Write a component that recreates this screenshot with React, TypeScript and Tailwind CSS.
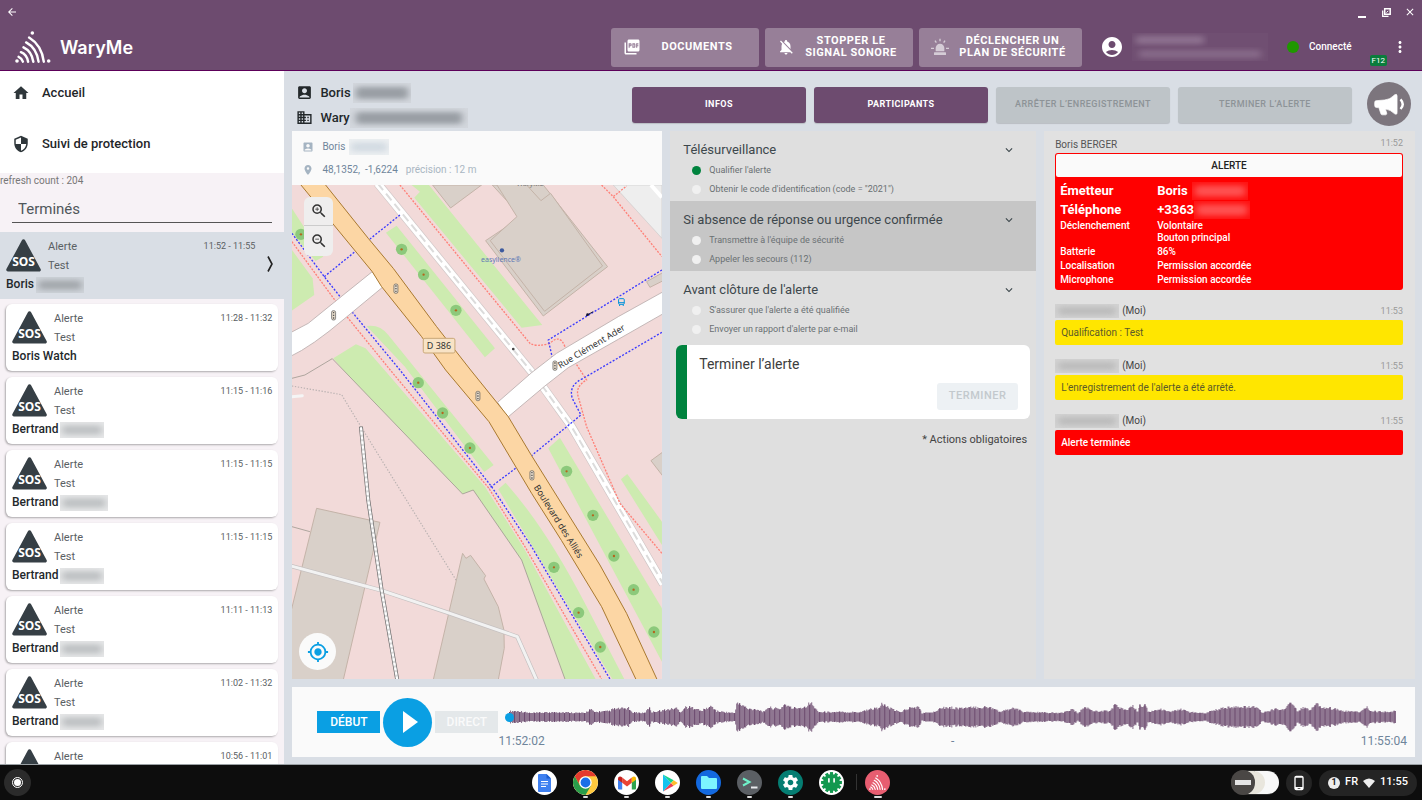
import React from "react";
import {
  MdAccountBox,
  MdAccountCircle,
  MdArrowBack,
  MdBusiness,
  MdClose,
  MdExpandMore,
  MdHome,
  MdLocationOn,
  MdMoreVert,
  MdMyLocation,
  MdNotificationsOff,
  MdOutlinePhoneAndroid,
  MdPictureAsPdf,
  MdSecurity,
  MdSettings,
  MdZoomIn,
  MdZoomOut,
} from "react-icons/md";

function Masked({ className, bar }: { className: string; bar: string }) {
  return (
    <span aria-hidden="true" className={`block overflow-hidden ${className}`}>
      <span className={`block h-full w-full scale-x-90 scale-y-60 rounded-sm blur-[4px] ${bar}`} />
    </span>
  );
}

function WaryLogo({ className }: { className: string }) {
  return (
    <svg viewBox="0 0 110 98" className={className} aria-hidden="true">
      <g fill="none" stroke="currentColor" strokeWidth="7.5" strokeLinecap="round">
        <path d="M43 20Q82 44 88 94" />
        <path d="M34 35Q66 52 72 94" />
        <path d="M26 50Q51 62 56 94" />
        <path d="M18 65Q36 72 40 94" />
        <path d="M11 79Q20 83 24 94" />
      </g>
      <g fill="currentColor">
        <circle cx="53" cy="6" r="5.5" />
        <circle cx="6" cy="92" r="5.5" />
        <circle cx="103" cy="92" r="5.5" />
      </g>
    </svg>
  );
}

function SosIcon() {
  return (
    <svg viewBox="0 0 35 33" className="h-[33px] w-[35px] shrink-0" aria-label="SOS" role="img">
      <path d="M17.5 2.2L33 30.8H2Z" fill="#363f45" stroke="#363f45" strokeWidth="3.6" strokeLinejoin="round" />
      <text x="17.5" y="26.5" textAnchor="middle" fontSize="12" fontWeight="700" fill="#fff" fontFamily="Noto Sans, sans-serif">
        SOS
      </text>
    </svg>
  );
}

function Siren() {
  return (
    <svg viewBox="0 0 54 54" className="h-[18px] w-[18px] shrink-0" fill="#d5ccd6" stroke="#d5ccd6" aria-hidden="true">
      <path d="M14 40V30a13 13 0 0 1 26 0v10z" stroke="none" />
      <rect x="9" y="43" width="36" height="8" rx="1" stroke="none" />
      <path d="M27 2v8M12 8l4 6M42 8l-4 6M0 31h9M45 31h9" strokeWidth="4" />
    </svg>
  );
}

function Header() {
  const btn =
    "flex h-[39px] items-center rounded-[3px] bg-[#977f98] pr-1.5 pl-3 text-[11px] leading-3 font-bold tracking-wider text-white";
  return (
    <header className="shrink-0 border-b border-[#5c0059] bg-[#6d4b6f] text-white">
      <div className="flex h-6 items-center px-1.5">
        <button aria-label="Retour">
          <MdArrowBack className="h-3 w-3" />
        </button>
        <div className="ml-auto flex items-center gap-3">
          <button aria-label="Réduire" className="flex h-3 w-3 items-end justify-center">
            <span className="h-[2px] w-2 bg-white" />
          </button>
          <button aria-label="Restaurer" className="flex h-3 w-3 items-center justify-center">
            <svg viewBox="0 0 9 9" className="h-[9px] w-[9px]" fill="none" stroke="#fff" aria-hidden="true">
              <path d="M2.7.8h5.5v5.5H2.7z" strokeWidth="1.5" />
              <path d="M.7 2.5v5.8h5.8" strokeWidth="1.3" />
              <path d="M4.5 4.6L6.3 2.8" />
            </svg>
          </button>
          <button aria-label="Fermer">
            <MdClose className="h-3 w-3" />
          </button>
        </div>
      </div>
      <div className="flex h-[46px] items-center pr-[13px] pl-[15px]">
        <WaryLogo className="h-8 w-9" />
        <span className="ml-[9px] pt-0.5 font-['Inter',sans-serif] text-[18px] leading-6 font-semibold">WaryMe</span>
        <div className="ml-auto flex gap-1.5">
          <button className={`${btn} w-[148px]`}>
            <MdPictureAsPdf className="h-[18px] w-[18px] shrink-0" />
            <span className="flex-1 text-center">DOCUMENTS</span>
          </button>
          <button className={`${btn} w-[148px]`}>
            <MdNotificationsOff className="h-[18px] w-[18px] shrink-0" />
            <span className="flex-1 text-center">
              STOPPER LE
              <br />
              SIGNAL SONORE
            </span>
          </button>
          <button className={`${btn} w-[163px]`}>
            <Siren />
            <span className="flex-1 text-center">
              DÉCLENCHER UN
              <br />
              PLAN DE SÉCURITÉ
            </span>
          </button>
        </div>
        <MdAccountCircle className="ml-[18px] h-6 w-6" />
        <div className="ml-2 flex w-[136px] flex-col bg-[#704f72]">
          <Masked className="h-3.5 w-[76px]" bar="bg-[#8d718f]" />
          <Masked className="h-3.5 w-[136px]" bar="bg-[#866988]" />
        </div>
        <span className="ml-[19px] h-3 w-3 rounded-full bg-[#1f9700]" />
        <span className="ml-2.5 text-[10px] leading-4 font-medium">Connecté</span>
        <span className="mt-[26px] ml-[18px] rounded-[2px] bg-[#0a7d3c] px-[2px] text-[8px] leading-[11px]">F12</span>
        <button aria-label="Plus d’options" className="ml-1">
          <MdMoreVert className="h-[18px] w-[18px]" />
        </button>
      </div>
    </header>
  );
}

type Item = { time: string; name: string; mask?: string };
const items: Item[] = [
  { time: "11:28 - 11:32", name: "Boris Watch" },
  { time: "11:15 - 11:16", name: "Bertrand", mask: "w-11" },
  { time: "11:15 - 11:15", name: "Bertrand", mask: "w-12" },
  { time: "11:15 - 11:15", name: "Bertrand", mask: "w-11" },
  { time: "11:11 - 11:13", name: "Bertrand", mask: "w-11" },
  { time: "11:02 - 11:32", name: "Bertrand", mask: "w-11" },
  { time: "10:56 - 11:01", name: "Bertrand", mask: "w-11" },
];

function AlertRow({ time, name, mask, selected }: Item & { selected?: boolean }) {
  return (
    <button
      className={`block h-[67px] w-full shrink-0 px-1.5 py-[5px] text-left ${
        selected ? "bg-[#d9dee5]" : "rounded-md bg-white shadow-[-1px_1px_2px_rgba(0,0,0,0.3)]"
      }`}
    >
      <span className="flex">
        <span className="pt-[2px]">
          <SosIcon />
        </span>
        <span className="ml-[7px] flex-1 text-[11px] leading-[19px] text-[#5a6063]">
          <span className="block">Alerte</span>
          <span className="block">Test</span>
        </span>
        <span className={`text-[9px] leading-[19px] text-[#5a6063] ${selected ? "mr-[11px]" : ""}`}>{time}</span>
        {selected && (
          <svg viewBox="0 0 8 18" className="mt-[18px] mr-1 h-[18px] w-2" fill="none" stroke="#222" strokeWidth="1.6" aria-hidden="true">
            <path d="M2 1.5L6 9L2 16.5" />
          </svg>
        )}
      </span>
      <span className="flex items-center text-[12px] leading-[19px] font-medium text-[#23282b]">
        {name}
        {mask && (
          <Masked
            className={`ml-0.5 h-4 ${selected ? "bg-[#cfd4da]" : "bg-[#e6e7e8]"} ${mask}`}
            bar={selected ? "bg-[#a5a9ae]" : "bg-[#bfc2c4]"}
          />
        )}
      </span>
    </button>
  );
}

function Sidebar() {
  return (
    <aside className="flex w-1/5 shrink-0 flex-col overflow-hidden bg-[#f7f2f6]">
      <nav className="h-[102px] shrink-0 bg-white text-[13px] leading-5 font-medium text-[#1f2629]">
        <a href="#accueil" className="flex h-11 items-center pl-3">
          <MdHome className="h-[18px] w-[18px] text-[#2f373b]" />
          <span className="ml-3">Accueil</span>
        </a>
        <a href="#suivi" className="flex h-[58px] items-center pl-3">
          <MdSecurity className="h-[18px] w-[18px] text-[#2f373b]" />
          <span className="ml-3">Suivi de protection</span>
        </a>
      </nav>
      <p className="text-[10px] leading-4 text-[#777]">refresh count : 204</p>
      <div className="h-[43px] shrink-0 px-3 pt-2">
        <select
          aria-label="Statut des alertes"
          className="h-[26px] w-full appearance-none border-b border-[#555] bg-transparent px-1.5 text-[15px] text-[#50575b]"
        >
          <option>Terminés</option>
        </select>
      </div>
      <AlertRow time="11:52 - 11:55" name="Boris" mask="w-12" selected />
      <div className="flex flex-col gap-1.5 px-1.5 pt-[5px]">
        {items.map((it, i) => (
          <AlertRow key={i} {...it} />
        ))}
      </div>
    </aside>
  );
}

function Megaphone() {
  return (
    <svg viewBox="0 0 90 66" className="h-[23px] w-[31px]" fill="#fff" aria-hidden="true">
      <path d="M6 22Q2 22 2 27V36Q2 42 8 42H14L20 60Q21 63 24 63H34Q38 62 37 58L33 46Q48 48 60 60Q67 64 67 56V8Q67 1 60 5Q46 20 30 20Z" stroke="#fff" strokeWidth="2" strokeLinejoin="round" />
      <path d="M77 18Q90 32 77 46" fill="none" stroke="#fff" strokeWidth="7" />
    </svg>
  );
}

function MainHeader() {
  const base = "h-9 w-[174px] rounded-[3px] text-[9px] tracking-wider shadow-[0_1px_1px_rgba(0,0,0,0.15)]";
  return (
    <div className="flex h-[60px] shrink-0 items-center pr-[11px] pl-3 text-[#23282b]">
      <div className="pt-2 text-[13px] leading-[25px] font-medium">
        <div className="flex items-center">
          <MdAccountBox className="h-[17px] w-[17px]" />
          <span className="ml-[7px]">Boris</span>
          <Masked className="ml-0.5 h-5 w-[58px] bg-[#d3d7dd]" bar="bg-[#999ea4]" />
        </div>
        <div className="flex items-center">
          <MdBusiness className="h-[17px] w-[17px]" />
          <span className="ml-[7px]">Wary</span>
          <Masked className="h-5 w-[118px] bg-[#d3d7dd]" bar="bg-[#999ea4]" />
        </div>
      </div>
      <div className="ml-auto flex gap-2 pt-2">
        <button className={`${base} bg-[#6d4b6f] font-bold text-white`}>INFOS</button>
        <button className={`${base} bg-[#6d4b6f] font-bold text-white`}>PARTICIPANTS</button>
        <button disabled className={`${base} bg-[#bec4c8] font-medium text-[#8d9397]`}>
          ARRÊTER L’ENREGISTREMENT
        </button>
        <button disabled className={`${base} bg-[#bec4c8] font-medium text-[#8d9397]`}>
          TERMINER L’ALERTE
        </button>
      </div>
      <button
        aria-label="Diffuser un message"
        className="mt-1.5 ml-[15px] flex h-11 w-11 items-center justify-center rounded-full bg-[#7c757d]"
      >
        <Megaphone />
      </button>
    </div>
  );
}

const trees = [
  [48, 493], [350, 538], [416, 614], [513, 721], [400, 938], [473, 1029], [555, 1134], [807, 1492], [881, 1628],
  [946, 1731], [845, 1204], [924, 1336], [987, 1458], [1046, 1559], [1107, 1686],
];
const lights = [[333, 656], [146, 736], [579, 978], [741, 1216], [810, 887]];

function MapDrawing() {
  return (
    <svg viewBox="0 0 370 494" preserveAspectRatio="xMidYMid slice" className="absolute inset-0 h-full w-full" role="img" aria-label="Carte">
      <rect width="370" height="494" fill="#f2dad9" />
      <g transform="translate(-7 -115) scale(0.33333)" fill="none">
        <g fill="#cdebb0">
          <path d="M380 345H432L772 765L710 773L388 383L405 365Z" />
          <path d="M21 415L115 560L92 573L21 490Z" />
          <path d="M21 540L83 625L88 675L21 722Z" />
          <path d="M303 488L335 467L630 835L600 862Z" />
          <path d="M245 768Q285 762 310 795L626 1185L598 1206L360 890Z" />
          <path d="M145 865L213 823L242 835L320 925L600 1250L720 1440L932 1827H840L710 1470L565 1260L533 1272L175 900Z" />
          <path d="M640 1258L662 1238Q780 1370 900 1600L1018 1827H982Z" />
          <path d="M790 1135L825 1103L1131 1615V1775Z" />
          <path d="M1008 1228L1027 1212L1131 1355V1425Z" />
        </g>
        <path d="M21 925L60 915L142 866L175 900L533 1272L565 1260L710 1470L840 1827M21 1370L75 1385" stroke="#a09a92" strokeWidth="2.5" />
        <path d="M985 345H1131V505Z" fill="#eeeeee" stroke="#ccc" strokeWidth="2" />
        <path d="M1098 345L1131 382" stroke="#fff" strokeWidth="12" />
        <g fill="#d9d0c9" stroke="#c4b3a8" strokeWidth="3">
          <path d="M443 345H590L497 414Z" />
          <path d="M622 345L710 440L602 512L775 738L968 590L795 370L775 345Z" />
          <path d="M636 345L696 440L616 512L779 724L953 588L797 370L768 392L725 345" />
          <path d="M1135 607L1085 635L1095 652L1135 632Z" />
          <path d="M1135 1145L1098 1172L1135 1220Z" />
          <path d="M95 1315L285 1357L175 1830H18V1625Z" />
          <path d="M533 1450L543 1465L557 1456L602 1517L597 1527L640 1610L657 1680L658 1735L640 1830H445Z" />
        </g>
        <path d="M21 948L170 974L228 1070L515 1533" stroke="#b8b0b0" strokeWidth="3.5" strokeDasharray="4 5" />
        <path d="M15 1487L285 1560L495 1630L697 1700L755 1830" stroke="#c5c0c0" strokeWidth="13" />
        <path d="M15 1487L285 1560L495 1630L697 1700L755 1830" stroke="#f2f2f2" strokeWidth="9" />
        <path d="M21 980L52 977" stroke="#f5f5f5" strokeWidth="9" strokeLinecap="round" />
        <path d="M228 1070L250 1290L290 1560L337 1830" stroke="#6b6b6b" strokeWidth="12" />
        <path d="M228 1072L250 1290L290 1560L337 1830" stroke="#d9d9d9" strokeWidth="8" />
        <path d="M228 1072L250 1290L290 1560L337 1830" stroke="#fff" strokeWidth="6" strokeDasharray="8 6" />
        <g strokeWidth="26" stroke="#cfc6c6">
          <path d="M278 340L745 912" />
          <path d="M770 945L860 1070L1135 1542" />
        </g>
        <g strokeWidth="22" stroke="#fff">
          <path d="M278 340L745 912" />
          <path d="M770 945L860 1070L1135 1542" />
        </g>
        <g strokeWidth="6" stroke="#dcdcdc" strokeDasharray="26 14">
          <path d="M278 340L745 912" />
          <path d="M770 945L860 1070L1135 1542" />
        </g>
        <g strokeWidth="4" stroke="#ff8078" strokeDasharray="6 4">
          <path d="M345 345L735 820Q755 832 795 820Q825 790 840 830L905 930Q870 950 880 980L905 1070L1005 1300L1131 1450" />
          <path d="M21 515L190 745L320 905L612 1255L720 1430L950 1827" />
          <path d="M950 345L985 380L1025 348M985 380L1131 560" />
        </g>
        <g strokeWidth="4" stroke="#3a3aff" strokeDasharray="6 5">
          <path d="M21 490L118 620L205 730L345 900L620 1250L740 1430L975 1827" />
          <path d="M345 435L255 507M208 547L118 620" />
          <path d="M1131 600L790 810L802 862" />
          <path d="M1131 787L895 925Q850 945 862 985L888 1035L740 1157M692 1195L612 1255" />
        </g>
        <g fill="#fff" stroke="#b9adad" strokeWidth="2.5">
          <path d="M15 789L70 760L165 683L262 605L295 650L180 745Q80 830 15 860Z" />
          <path d="M1135 665L1000 740L815 850L740 908L638 997L668 1042L780 948L850 893L1000 808L1135 731Z" />
        </g>
        <path
          d="M44 340L262 605L290 650L410 800L482 900L612 1055L740 1270L830 1412L950 1610L1055 1832H1118L1025 1630L945 1485L740 1157L670 1040L557 900L455 770L325 595L250 505L118 340Z"
          fill="#fcd6a4"
          stroke="#a9782f"
          strokeWidth="3"
        />
        {trees.map(([x, y]) => (
          <g key={`${x}-${y}`}>
            <circle cx={x} cy={y} r="17" fill="#8cc97b" />
            <circle cx={x} cy={y} r="3.5" fill="#b5651d" />
          </g>
        ))}
        {lights.map(([x, y]) => (
          <g key={`${x}-${y}`} stroke="#555" strokeWidth="2">
            <rect x={x - 6} y={y - 14} width="12" height="28" rx="5" fill="#e8dccb" />
            <path d={`M${x - 2} ${y - 8}h4M${x - 2} ${y}h4M${x - 2} ${y + 8}h4`} strokeWidth="4" />
          </g>
        ))}
        <circle cx="651" cy="541" r="6.5" fill="#3d5a9e" />
        <circle cx="685" cy="837" r="4" fill="#444" />
        <path d="M903 737L925 725" stroke="#113" strokeWidth="3" />
        <circle cx="908" cy="734" r="4" fill="#113" />
        <g stroke="#0092da" strokeWidth="3">
          <rect x="1001" y="686" width="17" height="17" rx="3" />
          <path d="M1001 698h17M1004 703v5M1015 703v5" />
        </g>
        <rect x="415" y="805" width="95" height="44" rx="5" fill="#f8e3c6" stroke="#c9a877" strokeWidth="3" />
      </g>
      <g fontFamily="Noto Sans, sans-serif" textAnchor="middle" fill="#333">
        <text x="147" y="164" fontSize="9">D 386</text>
        <text x="209" y="77" fontSize="7" fill="#6079b5">easylience®</text>
        <text x="238" y="1" fontSize="7" fill="#777">WaryMe</text>
        <text fontSize="9" transform="translate(301 164) rotate(-31)">Rue Clément Ader</text>
        <text fontSize="9" transform="translate(264 338) rotate(58)">Boulevard des Alliés</text>
      </g>
    </svg>
  );
}

function MapPanel() {
  return (
    <section className="flex min-h-0 flex-col bg-[#fafafa]">
      <div className="flex h-[54px] shrink-0 flex-col justify-center pl-2.5 text-[10px] leading-[23px] text-[#6f859b]">
        <div className="flex items-center">
          <MdAccountBox className="h-3 w-3 text-[#a5b4c2]" />
          <span className="ml-2">Boris</span>
          <Masked className="ml-1 h-4 w-10 bg-[#edf0f2]" bar="bg-[#d3dbe2]" />
        </div>
        <div className="flex items-center">
          <MdLocationOn className="h-3 w-3 text-[#a5b4c2]" />
          <span className="ml-2">48,1352,&nbsp; -1,6224</span>
          <span className="ml-2 text-[#a9b6c2]">précision : 12 m</span>
        </div>
      </div>
      <div className="relative min-h-0 flex-1 overflow-hidden">
        <MapDrawing />
        <div className="absolute top-3 left-3 flex flex-col divide-y divide-[#ccc] overflow-hidden rounded-md bg-[#efeeee] text-[#333]">
          <button aria-label="Zoom avant" className="flex h-[29px] w-[29px] items-center justify-center">
            <MdZoomIn className="h-[18px] w-[18px]" />
          </button>
          <button aria-label="Zoom arrière" className="flex h-[30px] w-[29px] items-center justify-center">
            <MdZoomOut className="h-[18px] w-[18px]" />
          </button>
        </div>
        <button
          aria-label="Centrer la carte"
          className="absolute bottom-[9px] left-[7px] flex h-[37px] w-[37px] items-center justify-center rounded-full bg-[#fafafa] text-[#0a9fe3]"
        >
          <MdMyLocation className="h-[22px] w-[22px]" />
        </button>
      </div>
    </section>
  );
}

const steps = [
  { title: "Télésurveillance", options: ["Qualifier l'alerte", "Obtenir le code d'identification (code = \"2021\")"], done: 0 },
  { title: "Si absence de réponse ou urgence confirmée", options: ["Transmettre à l'équipe de sécurité", "Appeler les secours (112)"], active: true },
  { title: "Avant clôture de l'alerte", options: ["S'assurer que l'alerte a été qualifiée", "Envoyer un rapport d'alerte par e-mail"] },
];

function ChecklistPanel() {
  return (
    <section className="bg-[#dfdfdf]">
      {steps.map((s) => (
        <div key={s.title} className={`h-[70px] pt-2 pr-5 pl-[13px] ${s.active ? "bg-[#c6c6c6]" : ""}`}>
          <button className="flex w-full items-center justify-between text-[13px] leading-[22px] text-[#3d474c]">
            {s.title}
            <MdExpandMore className="h-3.5 w-3.5" />
          </button>
          {s.options.map((o, i) => (
            <label key={o} className="flex items-center pl-[9px] text-[9px] leading-[19px] text-[#6a7073]">
              <input
                type="checkbox"
                defaultChecked={s.done === i}
                className="mr-2 h-[9px] w-[9px] appearance-none rounded-full bg-[#f0f0f0] checked:bg-[#00833e]"
              />
              {o}
            </label>
          ))}
        </div>
      ))}
      <div className="mx-1.5 mt-1 h-[74px] rounded-md border-l-[11px] border-[#00833e] bg-white pt-2 pr-3 pl-3">
        <h2 className="text-[14px] leading-[22px] text-[#3d3d3d]">Terminer l’alerte</h2>
        <div className="mt-2 flex justify-end">
          <button disabled className="h-[27px] w-[81px] rounded-[3px] bg-[#edf1f4] text-[11px] font-medium tracking-wider text-[#c3c9cd]">
            TERMINER
          </button>
        </div>
      </div>
      <p className="mt-3 pr-[9px] text-right text-[11px] leading-[18px] text-[#444]">* Actions obligatoires</p>
    </section>
  );
}

function Message({ mask, time, tone, text }: { mask: string; time: string; tone: string; text: string }) {
  return (
    <div>
      <div className="flex h-[30px] items-center pt-3 text-[10px] leading-4 text-[#444]">
        <Masked className={`mr-[3px] h-3.5 bg-[#d3d3d3] ${mask}`} bar="bg-[#bcbcbc]" />
        (Moi)
        <span className="ml-auto text-[9px] text-[#999]">{time}</span>
      </div>
      <p className={`h-[25px] rounded-[2px] px-1.5 text-[10px] leading-[25px] ${tone}`}>{text}</p>
    </div>
  );
}

const details = [
  ["Batterie", "86%"],
  ["Localisation", "Permission accordée"],
  ["Microphone", "Permission accordée"],
];

function LogPanel() {
  return (
    <section className="bg-[#e1e1e1] pr-3 pl-[11px]">
      <div className="flex h-[22px] items-center pt-1 text-[10px] text-[#555]">
        Boris BERGER
        <span className="ml-auto text-[9px] text-[#999]">11:52</span>
      </div>
      <div className="rounded-[3px] bg-[#ff0000] p-[1px] pb-[3px] text-white">
        <h2 className="rounded-[2px] bg-[#fafafa] text-center text-[10px] leading-[23px] font-medium text-[#222]">ALERTE</h2>
        <table className="mt-1 w-full table-fixed text-left text-[10px] leading-3 font-medium">
          <tbody>
            <tr className="h-[19px] text-[13px] font-bold">
              <th className="w-[101px] pl-1">Émetteur</th>
              <td>
                <div className="flex items-center">
                  Boris
                  <Masked className="ml-1 h-[18px] w-14 bg-[#ff1212]" bar="bg-[#ff5050]" />
                </div>
              </td>
            </tr>
            <tr className="h-[19px] text-[13px] font-bold">
              <th className="pl-1">Téléphone</th>
              <td>
                <div className="flex items-center">
                  +3363
                  <Masked className="h-[18px] w-14 bg-[#ff1212]" bar="bg-[#ff5050]" />
                </div>
              </td>
            </tr>
            <tr className="h-[26px] align-top">
              <th className="pt-px pl-1 font-medium">Déclenchement</th>
              <td className="pt-px">
                Volontaire
                <br />
                Bouton principal
              </td>
            </tr>
            {details.map(([k, v]) => (
              <tr key={k} className="h-3.5">
                <th className="pl-1 font-medium">{k}</th>
                <td>{v}</td>
              </tr>
            ))}
          </tbody>
        </table>
      </div>
      <Message mask="w-16" time="11:53" tone="bg-[#ffe600] text-[#5c5a2a]" text="Qualification : Test" />
      <Message mask="w-16" time="11:55" tone="bg-[#ffe600] text-[#5c5a2a]" text="L'enregistrement de l'alerte a été arrêté." />
      <Message mask="w-16" time="11:55" tone="bg-[#ff0000] font-medium text-white" text="Alerte terminée" />
    </section>
  );
}

// Loudness envelope as [position, half height] pairs.
const envelope: [number, number][] = [
  [0, 6], [10, 6], [20, 4], [50, 5], [75, 4], [81, 8], [85, 5], [100, 6], [103, 8], [119, 9], [122, 5], [135, 4],
  [140, 10], [142, 5], [155, 7], [167, 9], [171, 5], [176, 10], [187, 9], [191, 6], [202, 11], [207, 6], [225, 4],
  [227, 14], [235, 11], [238, 8], [247, 8], [255, 5], [258, 10], [270, 8], [275, 13], [282, 9], [295, 10],
  [301, 15], [306, 8], [310, 5], [330, 5], [350, 5], [360, 8], [368, 9], [372, 13], [380, 9], [390, 5], [400, 9],
  [409, 10], [412, 4], [425, 5], [430, 10], [450, 9], [475, 10], [485, 9], [490, 5], [503, 9], [515, 5], [552, 4],
  [562, 8], [568, 4], [575, 10], [585, 6], [600, 6], [605, 13], [610, 9], [618, 7], [623, 11], [628, 5], [630, 12],
  [636, 12], [638, 5], [650, 8], [660, 5], [670, 8], [680, 5], [695, 4], [708, 8], [720, 10], [748, 10], [752, 4],
  [765, 8], [775, 8], [777, 13], [783, 13], [787, 6], [795, 10], [800, 6], [807, 15], [812, 9], [820, 9], [835, 6],
  [850, 5], [857, 10], [860, 6], [875, 5], [886, 6],
];

function level(x: number) {
  const i = Math.max(1, envelope.findIndex(([p]) => p >= x));
  const [x0, a0] = envelope[i - 1];
  const [x1, a1] = envelope[i];
  const base = a0 + ((a1 - a0) * (x - x0)) / (x1 - x0);
  const noise = Math.abs(Math.sin(x * 12.9898) * 43758.5453) % 1;
  return base * (0.82 + noise * 0.3);
}

const wavePath = Array.from({ length: 886 }, (_, x) => {
  const a = level(x).toFixed(1);
  return `M${x + 0.5} ${16 - Number(a)}V${16 + Number(a)}`;
});

function Player() {
  return (
    <section className="mt-2 mr-[7px] mb-[7px] ml-2 flex h-[70px] shrink-0 items-center bg-[#fafafa] pr-2 pl-[25px]">
      <button className="h-[22px] w-[63px] bg-[#0a9fe3] text-[12px] font-medium text-white">DÉBUT</button>
      <button aria-label="Lecture" className="mx-[3px] flex h-[49px] w-[49px] items-center justify-center rounded-full bg-[#0a9fe3] text-white">
        <svg viewBox="0 0 16 22" className="ml-1 h-[22px] w-4" fill="currentColor" aria-hidden="true">
          <path d="M1 0L16 11L1 22Z" />
        </svg>
      </button>
      <button disabled className="h-[22px] w-[63px] bg-[#e4e8ea] text-[12px] font-medium text-[#fafafa]">
        DIRECT
      </button>
      <div className="flex-1">
        <div className="relative mt-1.5 mr-[11px] ml-[7px] h-8">
          <svg viewBox="0 0 886 32" preserveAspectRatio="none" className="h-full w-full pl-1" aria-hidden="true">
            <path d={wavePath.join("")} stroke="#8f7691" strokeWidth="1.1" fill="none" />
            <path d={wavePath.filter((_, i) => i % 5 === 0).join("")} stroke="#6d4b6f" strokeWidth="1" fill="none" />
          </svg>
          <input
            type="range"
            defaultValue={0}
            aria-label="Position de lecture"
            className="absolute inset-0 h-full w-full appearance-none bg-transparent [&::-webkit-slider-thumb]:h-[9px] [&::-webkit-slider-thumb]:w-[9px] [&::-webkit-slider-thumb]:appearance-none [&::-webkit-slider-thumb]:rounded-full [&::-webkit-slider-thumb]:bg-[#0a9fe3]"
          />
        </div>
        <div className="flex justify-between text-[12px] leading-4 text-[#6f859b]">
          <span>11:52:02</span>
          <span>-</span>
          <span>11:55:04</span>
        </div>
      </div>
    </section>
  );
}

function ShelfIcon({ label, bg, running, children }: { label: string; bg: string; running?: string; children: React.ReactNode }) {
  return (
    <button aria-label={label} className="flex flex-col items-center pt-[5px]">
      <span className={`flex h-[25px] w-[25px] items-center justify-center overflow-hidden rounded-full ${bg}`}>{children}</span>
      <span className={`mt-[1px] h-[2px] rounded-full ${running ?? "w-1"} ${running ? "bg-[#ddd]" : ""}`} />
    </button>
  );
}

const spikes = Array.from({ length: 12 }, (_, i) => i * 30);

function Shelf() {
  return (
    <footer className="grid h-9 shrink-0 grid-cols-[1fr_auto_1fr] border-t border-[#9aa0a4] bg-[#0d0d0d] text-white">
      <div className="flex items-center pl-1">
        <button aria-label="Lanceur" className="flex h-[27px] w-[27px] items-center justify-center rounded-full bg-[#2b2b2b]">
          <span className="flex h-[11px] w-[11px] items-center justify-center rounded-full border border-white">
            <span className="h-[7px] w-[7px] rounded-full bg-white" />
          </span>
        </button>
      </div>
      <div className="flex items-start gap-4">
        <ShelfIcon label="Docs" bg="bg-white">
          <svg viewBox="0 0 13 18" className="h-[18px] w-[13px]" aria-hidden="true">
            <path d="M1 0H8.5L13 4.5V17a1 1 0 0 1-1 1H1a1 1 0 0 1-1-1V1A1 1 0 0 1 1 0z" fill="#3f80f0" />
            <path d="M8.5 0L13 4.5H8.5z" fill="#1a5dd0" />
            <path d="M3 7.5h7M3 10h7M3 12.5h5" stroke="#fff" strokeWidth="1.2" />
          </svg>
        </ShelfIcon>
        <ShelfIcon label="Chrome" bg="bg-white" running="w-[5px]">
          <svg viewBox="0 0 24 24" className="h-[25px] w-[25px]" aria-hidden="true">
            <circle cx="12" cy="12" r="12" fill="#ffc93e" />
            <path d="M1.6 6A12 12 0 0 1 22.4 6H12A6 6 0 0 0 6.5 14.5z" fill="#e33b2e" />
            <path d="M1.6 6A12 12 0 0 0 12 24L17.2 15L6.8 15z" fill="#2a9d4b" />
            <circle cx="12" cy="12" r="6" fill="#fff" />
            <circle cx="12" cy="12" r="4.7" fill="#1a6fe8" />
          </svg>
        </ShelfIcon>
        <ShelfIcon label="Gmail" bg="bg-white" running="w-[5px]">
          <svg viewBox="0 0 18 14" className="h-[14px] w-[18px]" aria-hidden="true">
            <path d="M0 2.5V12.5Q0 13.5 1 13.5H4.2V6z" fill="#3f80f0" />
            <path d="M18 2.5V12.5Q18 13.5 17 13.5H13.8V6z" fill="#2fa24f" />
            <path d="M4.2 1.5V6.8L9 10.5L13.8 6.8V1.5L9 5.2z" fill="#e94335" />
            <path d="M0 2.5Q0 .5 2 .5Q3 .5 4.2 1.5V6.8L0 3.8z" fill="#c5221f" />
            <path d="M18 2.5Q18 .5 16 .5Q15 .5 13.8 1.5V6.8L18 3.8z" fill="#fbbc04" />
          </svg>
        </ShelfIcon>
        <ShelfIcon label="Play Store" bg="bg-white" running="w-[5px]">
          <svg viewBox="0 0 16 18" className="ml-1 h-[18px] w-4" aria-hidden="true">
            <path d="M1 .5V17.5L9 9z" fill="#12c3ef" />
            <path d="M1 .5L11.7 6.3L9 9z" fill="#13d58a" />
            <path d="M1 17.5L11.7 11.7L9 9z" fill="#ee3e52" />
            <path d="M11.7 6.3L15.8 9L11.7 11.7L9 9z" fill="#fdbf2d" />
          </svg>
        </ShelfIcon>
        <ShelfIcon label="Fichiers" bg="bg-[#1369df]" running="w-[5px]">
          <svg viewBox="0 0 16 13" className="h-[13px] w-4" fill="#7cf5ff" aria-hidden="true">
            <path d="M1 0H6L8 2H15Q16 2 16 3V12Q16 13 15 13H1Q0 13 0 12V1Q0 0 1 0z" />
          </svg>
        </ShelfIcon>
        <ShelfIcon label="Terminal" bg="bg-[#5b5f64]" running="w-[5px]">
          <svg viewBox="0 0 16 12" className="h-3 w-4" fill="none" strokeWidth="2" aria-hidden="true">
            <path d="M1 1.5L7.5 5L1 8.5" stroke="#6ff0c8" />
            <path d="M9 10.5H15.5" stroke="#e8eaed" />
          </svg>
        </ShelfIcon>
        <ShelfIcon label="Paramètres" bg="bg-[#057d72]" running="w-[5px]">
          <MdSettings className="h-[19px] w-[19px]" />
        </ShelfIcon>
        <ShelfIcon label="Assistant" bg="bg-white">
          <svg viewBox="-12 -12 24 24" className="h-[25px] w-[25px]" aria-hidden="true">
            {spikes.map((a) => (
              <rect key={a} x="-1.5" y="-10" width="3" height="4" fill="#12984f" transform={`rotate(${a})`} />
            ))}
            <circle r="8.2" fill="#12984f" />
            <path d="M-2.5 -4v4M2.5 -4v4" stroke="#fff" strokeWidth="1.6" />
          </svg>
        </ShelfIcon>
        <div className="-ml-1 flex items-start gap-2">
          <span className="mt-[9px] h-4 w-px bg-[#333]" />
          <ShelfIcon label="WaryMe" bg="bg-[#e75d70]" running="w-2">
            <WaryLogo className="h-[15px] w-[17px] text-white" />
          </ShelfIcon>
        </div>
      </div>
      <div className="flex items-center justify-end gap-[7px] pr-[5px]">
        <button aria-label="Captures récentes" className="flex h-[25px] items-center rounded-full bg-[#2b2b2b]">
          <span className="z-10 flex h-[25px] w-6 items-center justify-center rounded-full bg-[#4a4745]">
            <span className="h-[5px] w-4 bg-[#e4e4e4]" />
          </span>
          <span className="z-[5] -ml-2 h-[23px] w-[18px] rounded-r-full bg-[#e9e6dd]" />
          <span className="-ml-2.5 h-[23px] w-6 rounded-r-full bg-[#f8f8f8]" />
        </button>
        <button aria-label="Téléphone" className="flex h-[26px] w-[26px] items-center justify-center rounded-full bg-[#242424]">
          <MdOutlinePhoneAndroid className="h-4 w-4" />
        </button>
        <button className="flex h-[26px] items-center gap-[5px] rounded-full bg-[#242424] px-[9px] text-[11px] font-medium">
          <span className="flex h-3 w-3 items-center justify-center rounded-full bg-[#eee] text-[9px] font-bold text-[#222]">1</span>
          FR
          <svg viewBox="0 0 12 10" className="h-2.5 w-3" fill="#eee" aria-hidden="true">
            <path d="M0 3Q6 -2 12 3L6 10z" />
          </svg>
          11:55
        </button>
      </div>
    </footer>
  );
}

export default function App() {
  return (
    <div className="flex h-screen flex-col overflow-hidden bg-[#d9dee5] font-['Roboto',sans-serif]">
      <Header />
      <div className="flex min-h-0 flex-1">
        <Sidebar />
        <main className="flex min-w-0 flex-1 flex-col">
          <MainHeader />
          <div className="mr-[7px] ml-2 grid min-h-0 flex-1 grid-cols-[370fr_366fr_371fr] gap-2">
            <MapPanel />
            <ChecklistPanel />
            <LogPanel />
          </div>
          <Player />
        </main>
      </div>
      <Shelf />
    </div>
  );
}
